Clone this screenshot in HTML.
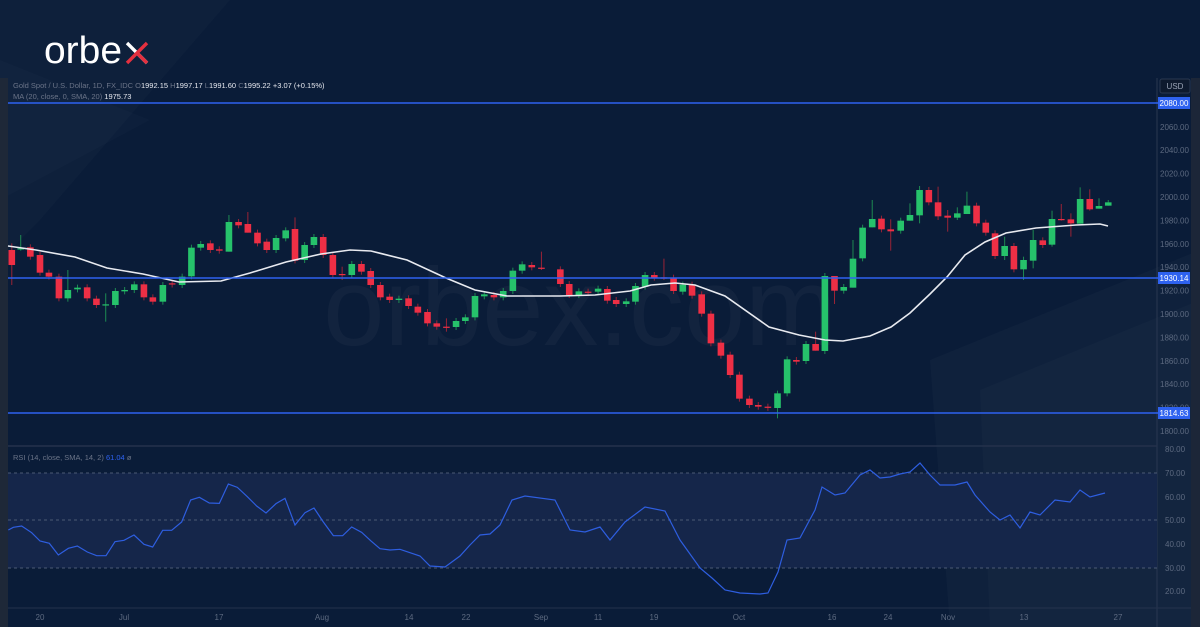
<!DOCTYPE html>
<html><head><meta charset="utf-8"><style>
html,body{margin:0;padding:0;background:#0a1c38;}
#w{position:relative;width:1200px;height:627px;overflow:hidden;background:#0a1c38;font-family:"Liberation Sans",sans-serif;}
svg{position:absolute;left:0;top:0}
</style></head><body><div id="w">
<svg id="s" width="1200" height="627" viewBox="0 0 1200 627" xmlns="http://www.w3.org/2000/svg">
<rect width="1200" height="627" fill="#0a1c38"/>
<polygon points="0,0 230,0 40,220 0,260" fill="#ffffff" opacity="0.02"/>
<polygon points="0,60 150,120 0,200" fill="#ffffff" opacity="0.015"/>
<polygon points="930,360 1200,250 1200,627 950,627" fill="#ffffff" opacity="0.025"/>
<polygon points="980,390 1200,300 1200,627 990,627" fill="#ffffff" opacity="0.02"/>
<rect x="0" y="78" width="8" height="549" fill="#1e2838"/>
<rect x="1191" y="78" width="9" height="549" fill="#1c2638"/>
<text x="580" y="345" font-size="110" fill="#ffffff" opacity="0.03" text-anchor="middle" font-family="Liberation Sans">orbex.com</text>
<text x="44" y="63" font-size="38" fill="#ffffff" font-family="Liberation Sans" textLength="78" lengthAdjust="spacingAndGlyphs">orbe</text>
<line x1="127" y1="43" x2="147" y2="63" stroke="#ffffff" stroke-width="3.4"/>
<line x1="137" y1="53" x2="147" y2="63" stroke="#e5303f" stroke-width="3.4"/>
<line x1="147" y1="43" x2="127" y2="63" stroke="#e5303f" stroke-width="3.4"/>
<line x1="1157" y1="78" x2="1157" y2="627" stroke="#2a3850" stroke-width="1"/>
<line x1="8" y1="446" x2="1157" y2="446" stroke="#24324c" stroke-width="1.5"/>
<line x1="8" y1="608" x2="1191" y2="608" stroke="#24324c" stroke-width="1"/>
<rect x="8" y="473" width="1149" height="95" fill="#15264a"/>
<g stroke="#4c5a74" stroke-dasharray="3,3" stroke-width="1">
<line x1="8" y1="473" x2="1157" y2="473"/><line x1="8" y1="520" x2="1157" y2="520"/><line x1="8" y1="568" x2="1157" y2="568"/></g>
<g id="cd"></g>
<polyline id="ma" fill="none" stroke="#e8eaf0" stroke-width="1.6"/>
<polyline id="rsi" fill="none" stroke="#2e5ee0" stroke-width="1.2"/>
<g stroke="#2e62f0" stroke-width="1.5"><line x1="8" y1="103" x2="1158" y2="103"/><line x1="8" y1="278" x2="1158" y2="278"/><line x1="8" y1="413" x2="1158" y2="413"/></g>
<g font-size="8" fill="#5d6a80" font-family="Liberation Sans" id="ax"></g>
<rect x="1160" y="79" width="30" height="14" rx="2" fill="#0e1a2e" stroke="#2a3850"/>
<text x="1175" y="89" font-size="8" fill="#9aa3b5" text-anchor="middle">USD</text>
<g font-size="8" fill="#fff" text-anchor="middle">
<rect x="1158" y="97" width="32" height="12" fill="#2e62f0"/><text x="1174" y="106">2080.00</text>
<rect x="1158" y="272" width="32" height="12" fill="#2e62f0"/><text x="1174" y="281">1930.14</text>
<rect x="1158" y="407" width="32" height="12" fill="#2e62f0"/><text x="1174" y="416">1814.63</text></g>
<text x="13" y="88" font-size="7.5" fill="#6b7488">Gold Spot / U.S. Dollar, 1D, FX_IDC  O<tspan fill="#e6e8ef">1992.15</tspan>  H<tspan fill="#e6e8ef">1997.17</tspan>  L<tspan fill="#e6e8ef">1991.60</tspan>  C<tspan fill="#e6e8ef">1995.22</tspan>  <tspan fill="#e6e8ef">+3.07 (+0.15%)</tspan></text>
<text x="13" y="99" font-size="7.5" fill="#6b7488">MA (20, close, 0, SMA, 20)  <tspan fill="#e6e8ef">1975.73</tspan></text>
<text x="13" y="460" font-size="7.5" fill="#6b7488">RSI (14, close, SMA, 14, 2)  <tspan fill="#2e62f0">61.04</tspan>  ø</text>
</svg>
<script>
var NS="http://www.w3.org/2000/svg",g=document.getElementById('cd');
var z4=[[33,150,195,130,255],[58,148,145,105,152],[85,142,170],[112,165,218],[137,218,230],[165,230,295],[190,295,270,210,305],[217,268,263],[244,262,295],[270,296,315],[296,314,313,280,365],[323,315,273],[349,274,270],[376,270,253],[403,253,292],[428,292,305],[456,305,255],[482,250,252],[510,255,230],[536,229,143],[562,143,132],[589,130,150],[614,148,152],[641,155,66,45,155],[668,66,76],[694,72,98,36,98],[721,98,130],[747,125,150],[773,150,114],[800,115,91],[826,87,182,52,190],[853,180,135],[879,135,111],[905,111,165],[932,165,225],[958,222,223,200,240],[985,225,192],[1012,192,215],[1038,213,255],[1065,255,292],[1091,290,300],[1117,300,296],[1144,295,318],[1170,320,338],[1197,336,370],[1223,370,380],[1250,380,381,355,395],[1277,381,363],[1303,363,352],[1330,352,288],[1356,289,283],[1383,285,292],[1409,292,273],[1436,273,212],[1462,212,193],[1489,195,202],[1516,203,205,155,210]];
var z5=[[55,268,312],[79,312,345],[105,345,334],[130,335,338],[157,335,326],[182,327,362],[206,360,372],[233,372,364],[258,365,318],[284,320,285],[309,285,293],[335,292,296,236,300],[361,293,333],[386,335,314],[411,314,347],[437,343,401],[462,401,490],[489,488,527],[514,524,585],[539,584,656],[566,656,675],[590,675,680],[616,680,683],[642,684,640,632,715],[668,640,538],[693,540,545],[719,543,492],[745,492,512,455,512],[770,513,288],[796,288,332,288,372],[821,332,321],[846,323,236,180,323],[872,235,143],[898,142,117,60,142],[923,116,148],[948,148,154,118,212],[975,152,122],[1000,122,105,70,122],[1026,106,30,18,130],[1051,30,67],[1076,67,109,20,120],[1102,107,113,90,155],[1128,113,100,82,120],[1154,102,77,35,102],[1180,77,130],[1205,128,158],[1230,160,228],[1256,228,198,170,240],[1281,198,268],[1307,268,240,230,300],[1333,242,180,150,265],[1359,181,195],[1384,194,117,92,200],[1409,117,119,72,122],[1435,118,130,100,170],[1460,131,57,22,131],[1486,57,88,28,92],[1511,86,78,55,86],[1536,77,67,60,77]];
function add(x,o,c,h,l){var up=c<o;var col=up?'#26c26b':'#ee2f45';var t=Math.min(o,c),b=Math.max(o,c);if(b-t<1.2){b=t+1.2;}
var hi=h!==undefined?Math.min(h,t):t-3,lo=l!==undefined?Math.max(l,b):b+3;
var ln=document.createElementNS(NS,'line');ln.setAttribute('x1',x);ln.setAttribute('x2',x);ln.setAttribute('y1',hi);ln.setAttribute('y2',lo);ln.setAttribute('stroke',up?'#1d8a52':'#9a2336');ln.setAttribute('stroke-width',1);g.appendChild(ln);
var r=document.createElementNS(NS,'rect');r.setAttribute('x',x-3.3);r.setAttribute('y',t);r.setAttribute('width',6.6);r.setAttribute('height',b-t);r.setAttribute('fill',col);g.appendChild(r);}
z4.forEach(function(a){add(a[0]/2.8,200+a[1]/3,200+a[2]/3,a[3]!==undefined?200+a[3]/3:undefined,a[4]!==undefined?200+a[4]/3:undefined);});
z5.forEach(function(a){add(540+a[0]/2.703,180+a[1]/3,180+a[2]/3,a[3]!==undefined?180+a[3]/3:undefined,a[4]!==undefined?180+a[4]/3:undefined);});
document.getElementById('ma').setAttribute('points',"8,246 36,250 75,257 107,268 143,274 179,282 221,281 250,273 286,262 321,254 350,250 371,251 407,260 446,278 475,290 507,296 560,296 595,295 630,291 651,285 675,283 695,285 725,296 769,327 799,335 825,340 843,341 870,336 891,327 910,313 930,294 947,277 965,255 985,242 1006,233 1036,228 1076,225 1100,224 1108,226");
var r1=[[25,270],[40,262],[65,258],[95,278],[120,303],[148,310],[175,345],[205,325],[232,318],[262,336],[290,347],[318,347],[345,305],[372,301],[402,285],[432,313],[458,321],[488,271],[515,271],[545,246],[572,180],[598,172],[628,189],[658,190],[685,132],[712,142],[742,170],[770,198],[798,219],[828,191],[855,175],[885,255],[915,218],[942,204],[970,246],[1000,287],[1028,287],[1055,261],[1085,277],[1112,302],[1140,326],[1170,330],[1200,328]];
var pts=r1.map(function(p){return (p[0]/3)+','+(440+p[1]/3);}).join(' ');
pts+=" 420,556 430,566 445,567 460,556 470,545 480,535 490,534 500,525 512,500 525,496 555,500 570,530 585,532 600,527 610,540 625,522 645,507 665,511 680,540 700,568 712,578 725,590 740,593 760,594 768,593 778,572 787,540 800,538 815,510 822,487 835,495 845,493 860,475 870,470 880,478 890,477 900,474 910,472 920,463 930,475 940,485 955,485 967,482 975,495 990,512 1000,520 1010,515 1020,528 1030,512 1040,515 1055,500 1070,502 1080,490 1090,497 1105,493";
document.getElementById('rsi').setAttribute('points',pts);
var ax=document.getElementById('ax'),h='';
for(var p=2060;p>=1800;p-=20){var y=197+(2000-p)*1.17+3;h+='<text x="1160" y="'+y.toFixed(1)+'">'+p+'.00</text>';}
[[80,449],[70,473],[60,497],[50,520],[40,544],[30,568],[20,591]].forEach(function(a){h+='<text x="1165" y="'+(a[1]+3)+'">'+a[0]+'.00</text>';});
[['20',40],['Jul',124],['17',219],['Aug',322],['14',409],['22',466],['Sep',541],['11',598],['19',654],['Oct',739],['16',832],['24',888],['Nov',948],['13',1024],['27',1118]].forEach(function(a){h+='<text x="'+a[1]+'" y="620" text-anchor="middle">'+a[0]+'</text>';});
ax.innerHTML=h;
</script>
</div></body></html>
